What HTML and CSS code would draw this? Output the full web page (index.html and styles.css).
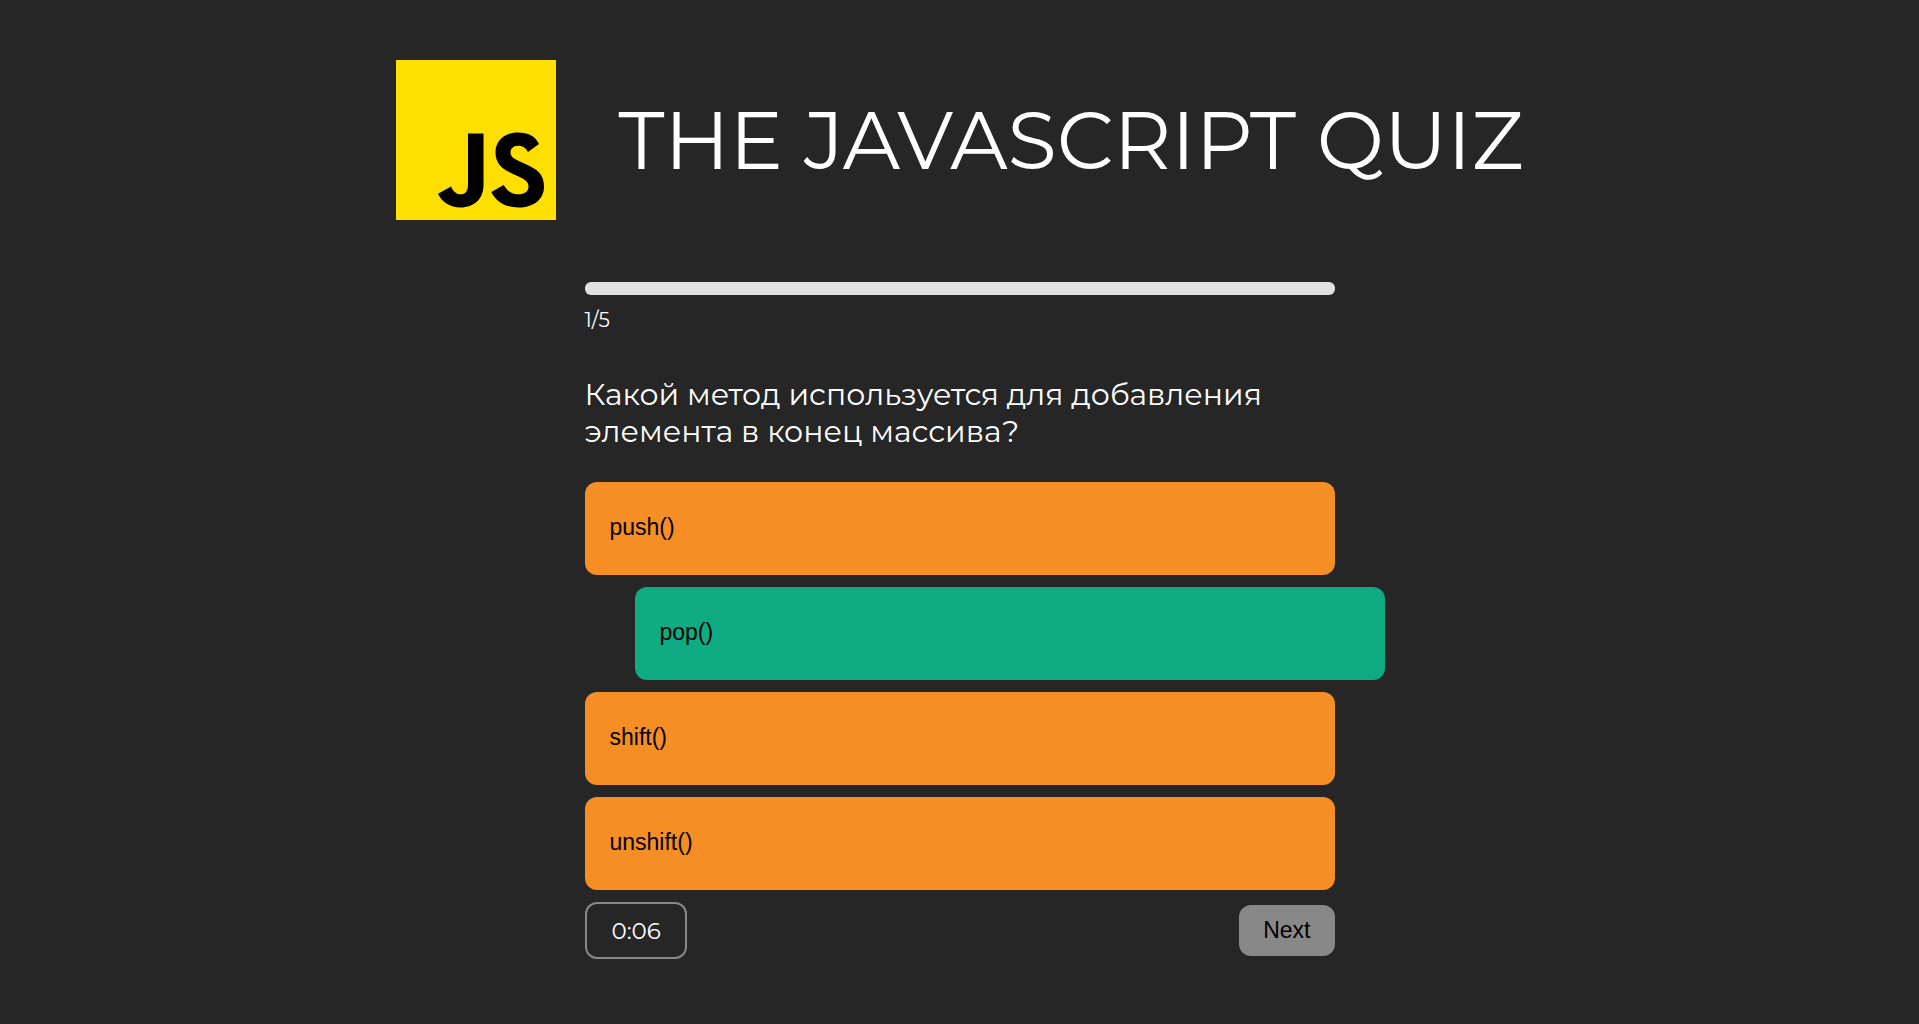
FILE: index.html
```html
<!DOCTYPE html>
<html lang="ru">
<head>
  <meta charset="utf-8">
  <meta name="viewport" content="width=device-width, initial-scale=1">
  <title>The JavaScript Quiz</title>
  <link rel="stylesheet" href="styles.css">
</head>
<body>
  <header class="header">
    <svg class="logo" viewBox="0 0 160 160" role="img" aria-label="JavaScript">
      <rect class="logo-bg" width="160" height="160"/>
      <path d="M72 73.500H87.500V125C87.500 139 78 147.500 64.500 147.500C54 147.500 46 142 42 133.700L55 126.500C57 131 60 134.300 64.500 134.300C69.500 134.300 72 131 72 124Z"/>
      <path d="M143 84L132 92C130 88 127 85.700 122 85.700C117.500 85.700 114.500 88.500 114.500 92.300C114.500 97 118 99 125 102L130 104.200C141.500 109.200 148 114.500 148 126.500C148 139.500 137.500 147.500 122.500 147.500C109 147.500 100 141.500 95.300 132L107.700 125C111 130.500 115 134.300 122 134.300C128.500 134.300 132.500 131.500 132.500 126.500C132.500 121.500 128.500 119.200 121.500 116L117.500 114.200C106.500 109.500 99.500 104 99.500 92.300C99.500 81 108.500 72.500 122 72.500C132 72.500 139 76 143 84Z"/>
    </svg>
    <h1 class="title">THE JAVASCRIPT QUIZ</h1>
  </header>
  <main class="quiz">
    <div class="progress" role="progressbar" aria-valuemin="0" aria-valuemax="5" aria-valuenow="0" aria-label="Прогресс"></div>
    <p class="count">1/5</p>
    <h2 class="question">Какой метод используется для добавления элемента в конец массива?</h2>
    <div class="options">
      <button class="option" type="button">push()</button>
      <button class="option selected" type="button">pop()</button>
      <button class="option" type="button">shift()</button>
      <button class="option" type="button">unshift()</button>
    </div>
    <footer class="footer">
      <div class="timer">0:06</div>
      <button class="next" type="button">Next</button>
    </footer>
  </main>
</body>
</html>
```
FILE: styles.css
```css
* {
  box-sizing: border-box;
}

body {
  margin: 0;
  padding: 60px 24px;
  background: #262626;
  color: #fff;
  font-family: Montserrat, Inter, sans-serif;
}

.header {
  display: flex;
  align-items: center;
  justify-content: center;
  gap: 63px;
}

.logo {
  flex: none;
  width: 160px;
  height: 160px;
}

.logo-bg {
  fill: #ffdf00;
}

.title {
  margin: 0;
  padding-top: 2px;
  font-size: 80px;
  font-weight: 400;
  line-height: 98px;
}

.quiz {
  max-width: 750px;
  margin: 62px auto 0;
}

.progress {
  height: 13px;
  border-radius: 6px;
  background: #e0e0e0;
}

.count {
  margin: 13px 0 0;
  font-size: 20px;
  line-height: 25px;
}

.question {
  margin: 43px 0 32px;
  font-size: 30px;
  font-weight: 400;
  line-height: 37px;
}

.options {
  display: grid;
  gap: 12px;
}

.option,
.next {
  border: 0;
  border-radius: 12px;
  color: #000;
  font-family: "Liberation Sans", sans-serif;
  font-size: 23px;
  line-height: 27px;
  cursor: pointer;
}

.option {
  padding: 32px 25px 34px;
  background: #f68e26;
  text-align: left;
}

.option.selected {
  background: #0fab82;
  transform: translateX(50px);
}

.footer {
  display: flex;
  align-items: center;
  justify-content: space-between;
  margin-top: 12px;
}

.timer {
  padding: 14px 24px 12px 25px;
  border: 2px solid #888;
  border-radius: 12px;
  font-size: 23px;
  line-height: 27px;
}

.next {
  padding: 12px 24px;
  background: #888;
}
```
